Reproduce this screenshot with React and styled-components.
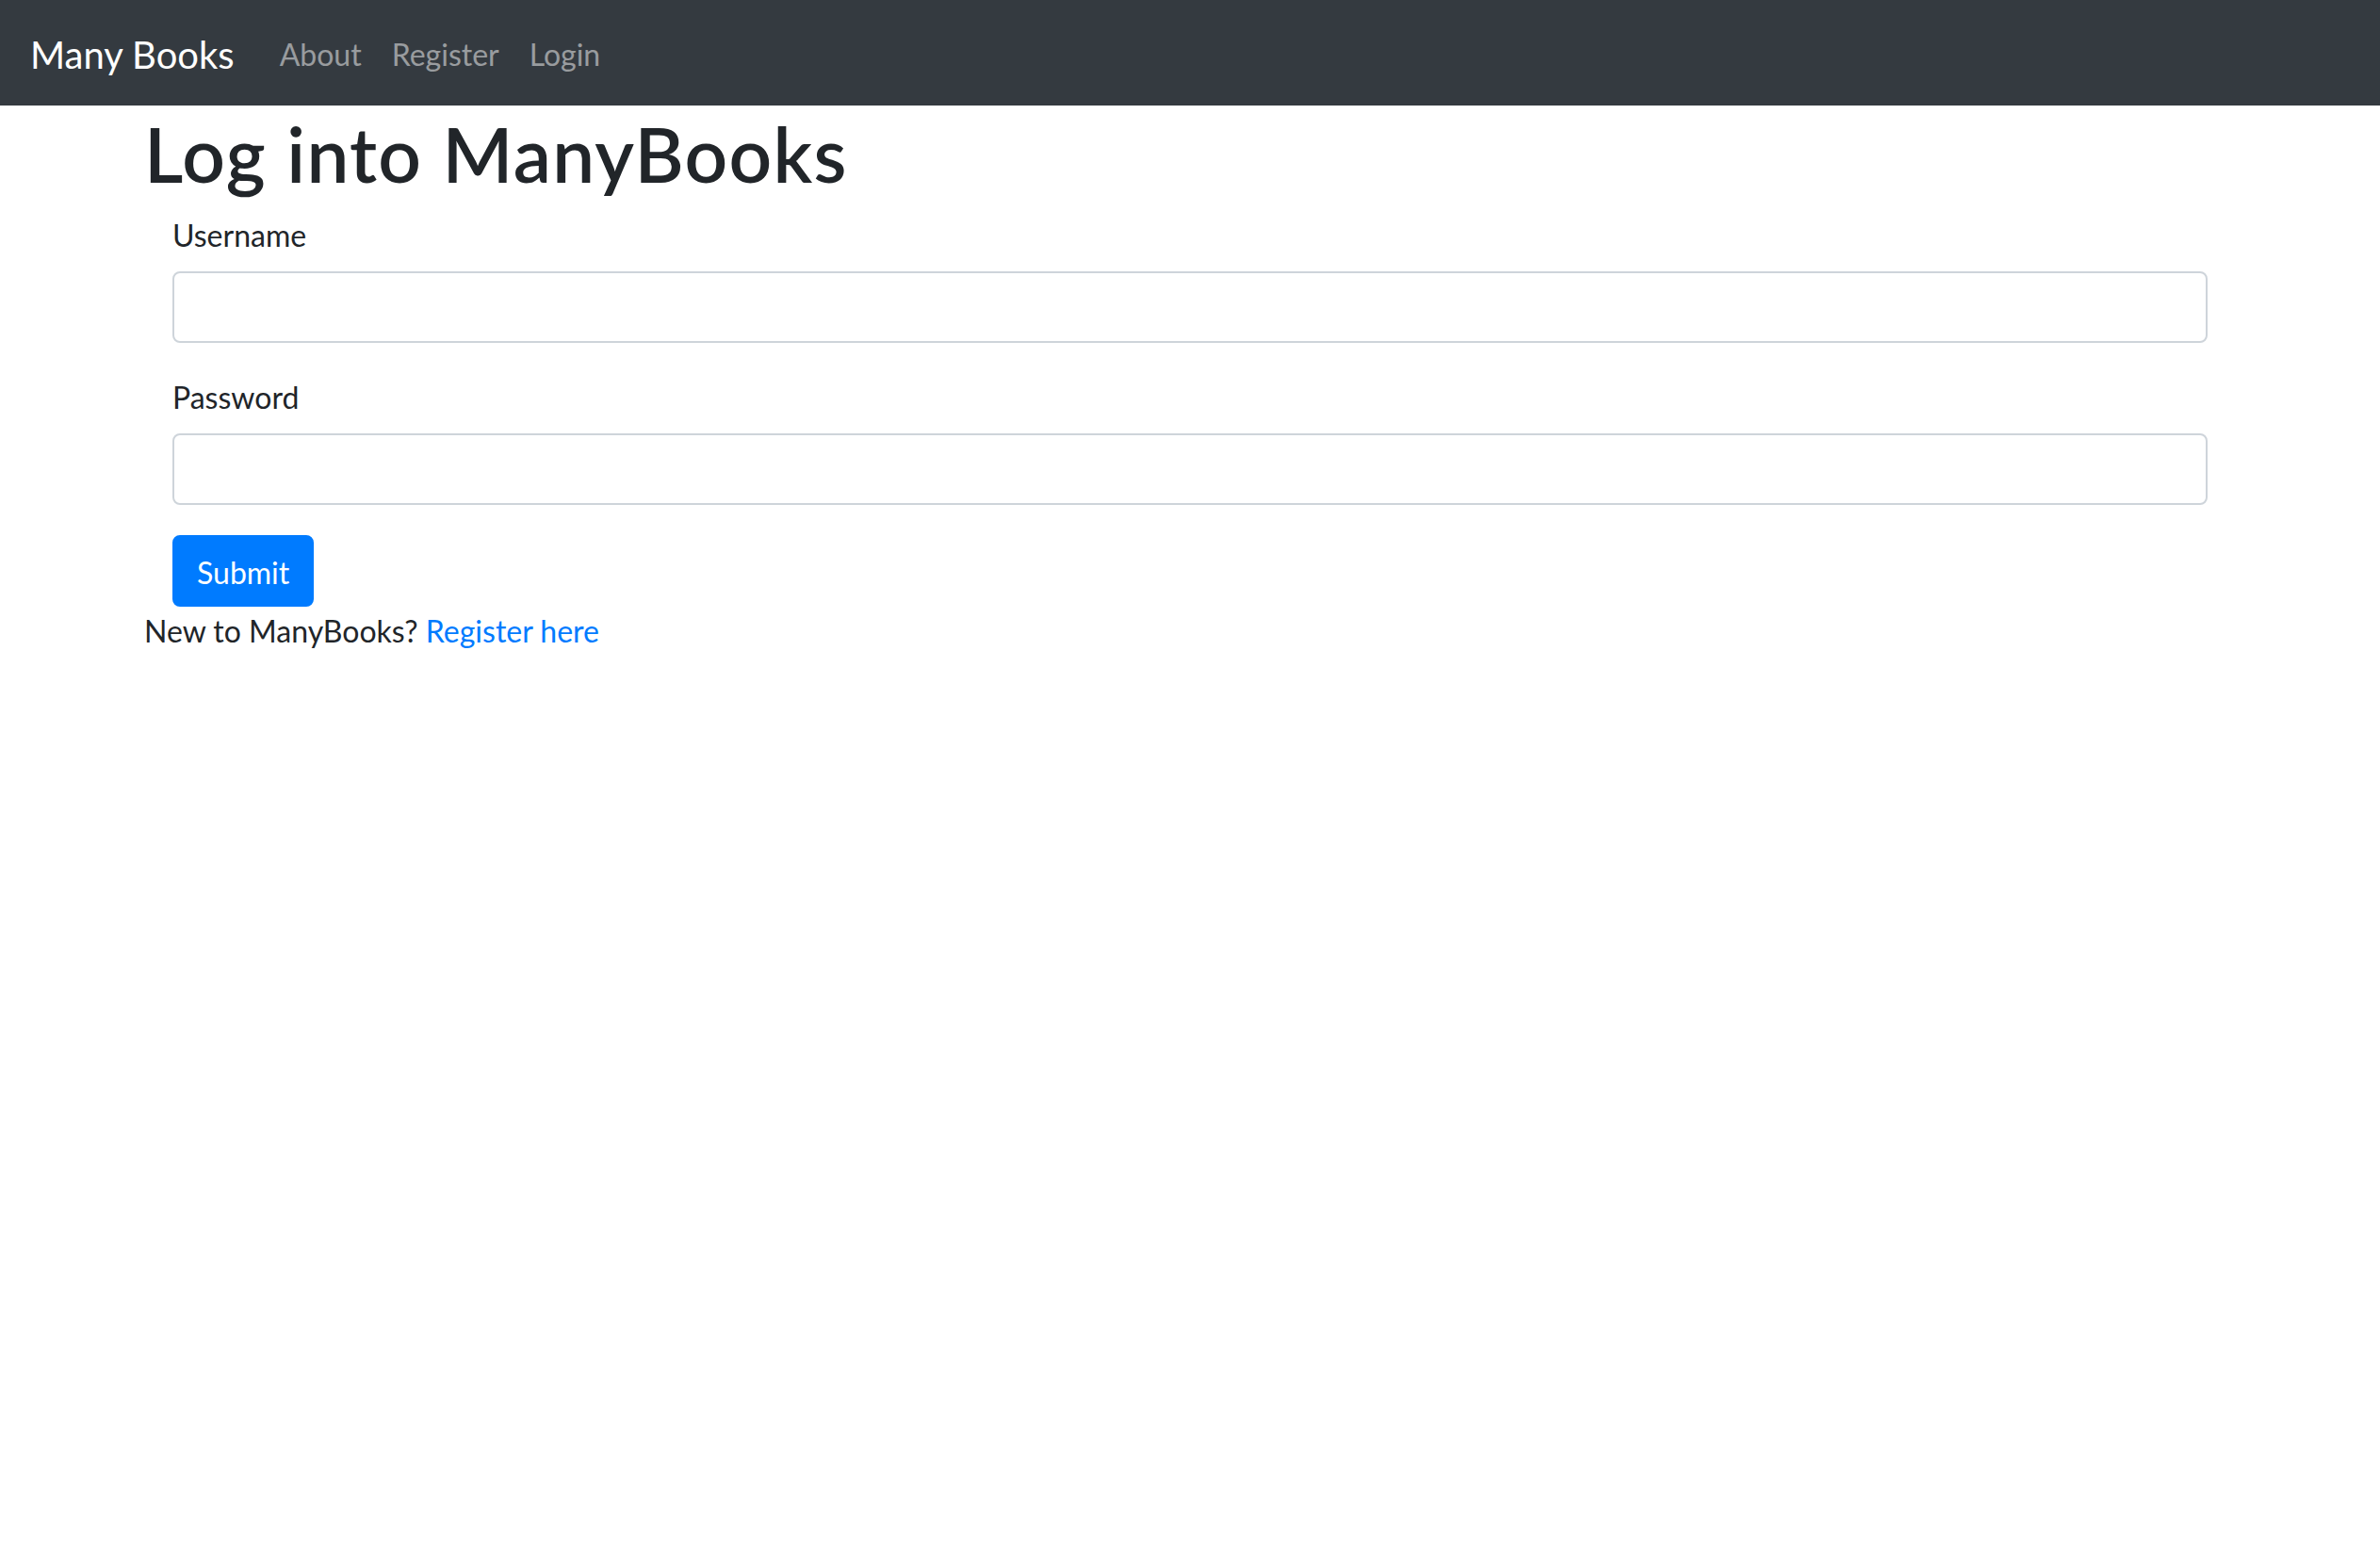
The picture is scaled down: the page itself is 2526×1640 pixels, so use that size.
import React from 'react';
import styled, { createGlobalStyle } from 'styled-components';

const GlobalStyle = createGlobalStyle`
    * {
        box-sizing: border-box;
    }
    body {
        margin: 0;
        background: #fff;
        color: #212529;
        font-family: Lato, "Open Sans", sans-serif;
        font-size: 32px;
        line-height: 1.5;
    }
`

const Navbar = styled.nav`
    display: flex;
    align-items: center;
    padding: 16px 32px;
    background: #343a40;
`

const Brand = styled.a`
    padding: 12px 0 8px;
    margin-right: 32px;
    font-size: 40px;
    line-height: 60px;
    color: #fff;
    text-decoration: none;
`

const NavLinks = styled.div`
    display: flex;
`

const NavLink = styled.a`
    padding: 18px 16px 14px;
    font-size: 32px;
    line-height: 48px;
    color: rgba(255, 255, 255, 0.5);
    text-decoration: none;
`

const Container = styled.main`
    max-width: 2280px;
    margin: 0 auto;
    padding: 0 30px;
`

const Title = styled.h1`
    margin: 0 0 16px;
    padding-top: 3px;
    height: 96px;
    font-size: 80px;
    font-weight: 600;
    line-height: 1.2;
    letter-spacing: 1.3px;
`

const Form = styled.form`
    padding: 0 30px;
`

const FormGroup = styled.div`
    margin-bottom: 32px;
`

const Label = styled.label`
    display: inline-block;
    margin-bottom: 16px;
    padding-top: 2px;
    height: 48px;
`

const Input = styled.input`
    display: block;
    width: 100%;
    height: 76px;
    padding: 12px 24px;
    font: inherit;
    color: #495057;
    border: 2px solid #ced4da;
    border-radius: 8px;
    background: #fff;
`

const Button = styled.button`
    padding: 14px 24px 10px;
    font: inherit;
    line-height: 48px;
    color: #fff;
    background: #007bff;
    border: 2px solid #007bff;
    border-radius: 8px;
    cursor: pointer;
`

const Footnote = styled.p`
    margin: 0;
    padding-top: 2px;
`

const Link = styled.a`
    color: #007bff;
    text-decoration: none;
`

export default function App() {
    return (
        <>
            <GlobalStyle />
            <Navbar>
                <Brand href="#">Many Books</Brand>
                <NavLinks>
                    <NavLink href="#">About</NavLink>
                    <NavLink href="#">Register</NavLink>
                    <NavLink href="#">Login</NavLink>
                </NavLinks>
            </Navbar>
            <Container>
                <Title>Log into ManyBooks</Title>
                <Form onSubmit={(e) => e.preventDefault()}>
                    <FormGroup>
                        <Label htmlFor="username">Username</Label>
                        <Input id="username" type="text" />
                    </FormGroup>
                    <FormGroup>
                        <Label htmlFor="password">Password</Label>
                        <Input id="password" type="password" />
                    </FormGroup>
                    <Button type="submit">Submit</Button>
                </Form>
                <Footnote>
                    New to ManyBooks? <Link href="#">Register here</Link>
                </Footnote>
            </Container>
        </>
    )
}
